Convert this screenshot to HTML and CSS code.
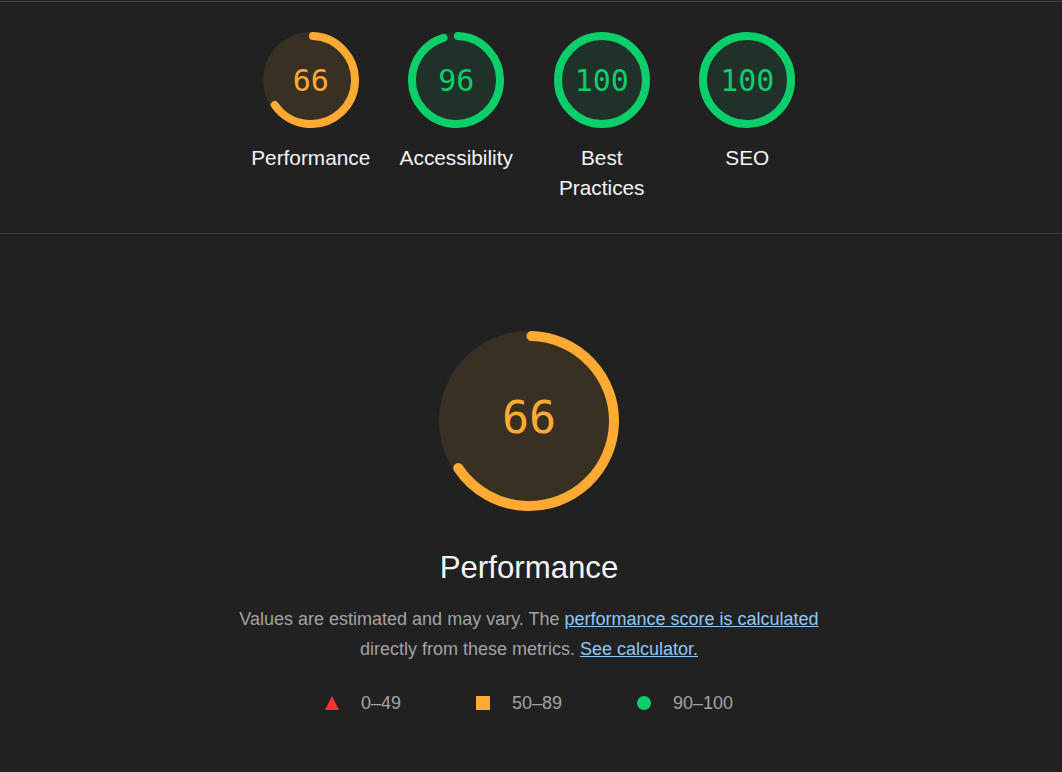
FILE: index.html
```html
<!DOCTYPE html>
<html lang="en">
<head>
<meta charset="utf-8">
<title>Lighthouse Report</title>
<link rel="stylesheet" href="styles.css">
</head>
<body>
<div class="report">
  <header class="scores">
    <div class="scores-inner">
      <div class="gauge-wrap gauge-average">
        <div class="gauge">
          <svg viewBox="0 0 96 96" class="gauge-svg">
            <circle class="gauge-base" cx="48" cy="48" r="48"></circle>
            <circle class="gauge-arc" cx="48" cy="48" r="44" stroke-width="8" stroke-dasharray="178.5 276.5" transform="rotate(-87.4 48 48)"></circle>
          </svg>
          <span class="gauge-value">66</span>
        </div>
        <div class="gauge-label">Performance</div>
      </div>
      <div class="gauge-wrap gauge-pass">
        <div class="gauge">
          <svg viewBox="0 0 96 96" class="gauge-svg">
            <circle class="gauge-base" cx="48" cy="48" r="48"></circle>
            <circle class="gauge-arc" cx="48" cy="48" r="44" stroke-width="8" stroke-dasharray="261.4 276.5" transform="rotate(-87.4 48 48)"></circle>
          </svg>
          <span class="gauge-value">96</span>
        </div>
        <div class="gauge-label">Accessibility</div>
      </div>
      <div class="gauge-wrap gauge-pass">
        <div class="gauge">
          <svg viewBox="0 0 96 96" class="gauge-svg">
            <circle class="gauge-base" cx="48" cy="48" r="48"></circle>
            <circle class="gauge-arc" cx="48" cy="48" r="44" stroke-width="8"></circle>
          </svg>
          <span class="gauge-value">100</span>
        </div>
        <div class="gauge-label">Best<br>Practices</div>
      </div>
      <div class="gauge-wrap gauge-pass">
        <div class="gauge">
          <svg viewBox="0 0 96 96" class="gauge-svg">
            <circle class="gauge-base" cx="48" cy="48" r="48"></circle>
            <circle class="gauge-arc" cx="48" cy="48" r="44" stroke-width="8"></circle>
          </svg>
          <span class="gauge-value">100</span>
        </div>
        <div class="gauge-label">SEO</div>
      </div>
    </div>
  </header>

  <section class="category">
    <div class="big-gauge gauge-average">
      <svg viewBox="0 0 180 180" class="gauge-svg">
        <circle class="gauge-base" cx="90" cy="90" r="90"></circle>
        <circle class="gauge-arc" cx="90" cy="90" r="85" stroke-width="10" stroke-dasharray="347.5 534.1" transform="rotate(-88.3 90 90)"></circle>
      </svg>
      <span class="big-value">66</span>
    </div>
    <h2 class="category-title">Performance</h2>
    <p class="category-desc">Values are estimated and may vary. The <a href="#">performance score is calculated</a> directly from these metrics. <a href="#">See calculator.</a></p>
    <div class="legend">
      <div class="legend-item">
        <svg class="legend-icon" viewBox="0 0 14 14"><polygon points="7,0 14,14 0,14" fill="#ff3333"></polygon></svg>
        <span>0–49</span>
      </div>
      <div class="legend-item">
        <span class="legend-square"></span>
        <span>50–89</span>
      </div>
      <div class="legend-item">
        <span class="legend-circle"></span>
        <span>90–100</span>
      </div>
    </div>
  </section>
</div>
</body>
</html>
```

FILE: styles.css
```css
html, body {
  margin: 0;
  padding: 0;
  background: #212121;
}

body {
  padding-top: 1px;
  font-family: "Liberation Sans", Arial, sans-serif;
  color: #f5f5f5;
}

.report {
  border-top: 1px solid #464646;
}

.scores {
  padding: 30px 4px 30px 0;
  border-bottom: 1px solid #424242;
}

.scores-inner {
  display: flex;
  justify-content: center;
}

.gauge-wrap {
  width: 145.5px;
  display: flex;
  flex-direction: column;
  align-items: center;
}

.gauge {
  position: relative;
  width: 96px;
  height: 96px;
}

.gauge-svg {
  display: block;
  width: 100%;
  height: 100%;
}

.gauge-arc {
  fill: none;
  stroke-linecap: round;
}

.gauge-average .gauge-base { fill: #393024; }
.gauge-average .gauge-arc { stroke: #ffaa33; }
.gauge-average .gauge-value,
.gauge-average .big-value { color: #ffaa33; }

.gauge-pass .gauge-base { fill: #1f3128; }
.gauge-pass .gauge-arc { stroke: #0cce6b; }
.gauge-pass .gauge-value { color: #0cce6b; }

.gauge-value {
  position: absolute;
  inset: 0;
  display: flex;
  align-items: center;
  justify-content: center;
  font-family: "DejaVu Sans Mono", monospace;
  font-size: 30px;
}

.gauge-label {
  margin-top: 15px;
  font-size: 20.8px;
  line-height: 30px;
  text-align: center;
  color: #f5f5f5;
}

.category {
  display: flex;
  flex-direction: column;
  align-items: center;
  padding: 97px 4px 0 0;
}

.big-gauge {
  position: relative;
  width: 180px;
  height: 180px;
}

.big-value {
  position: absolute;
  inset: 0;
  padding-bottom: 7px;
  display: flex;
  align-items: center;
  justify-content: center;
  font-family: "DejaVu Sans Mono", monospace;
  font-size: 45px;
}

.category-title {
  margin: 39px 0 0;
  font-weight: normal;
  font-size: 31.2px;
  line-height: 36px;
  color: #f5f5f5;
}

.category-desc {
  margin: 18px 0 0;
  max-width: 610px;
  text-align: center;
  font-size: 18px;
  line-height: 30px;
  color: #a3a3a3;
}

.category-desc a {
  color: #8ec9f9;
  text-decoration: underline;
}

.legend {
  display: flex;
  justify-content: center;
  gap: 75px;
  margin-top: 27px;
  font-size: 18px;
  line-height: 24px;
  color: #a3a3a3;
}

.legend-item {
  display: flex;
  align-items: center;
  gap: 22px;
}

.legend-icon {
  width: 14px;
  height: 14px;
  display: block;
}

.legend-square {
  width: 14px;
  height: 14px;
  background: #ffaa33;
}

.legend-circle {
  width: 14px;
  height: 14px;
  border-radius: 50%;
  background: #0cce6b;
}
```
